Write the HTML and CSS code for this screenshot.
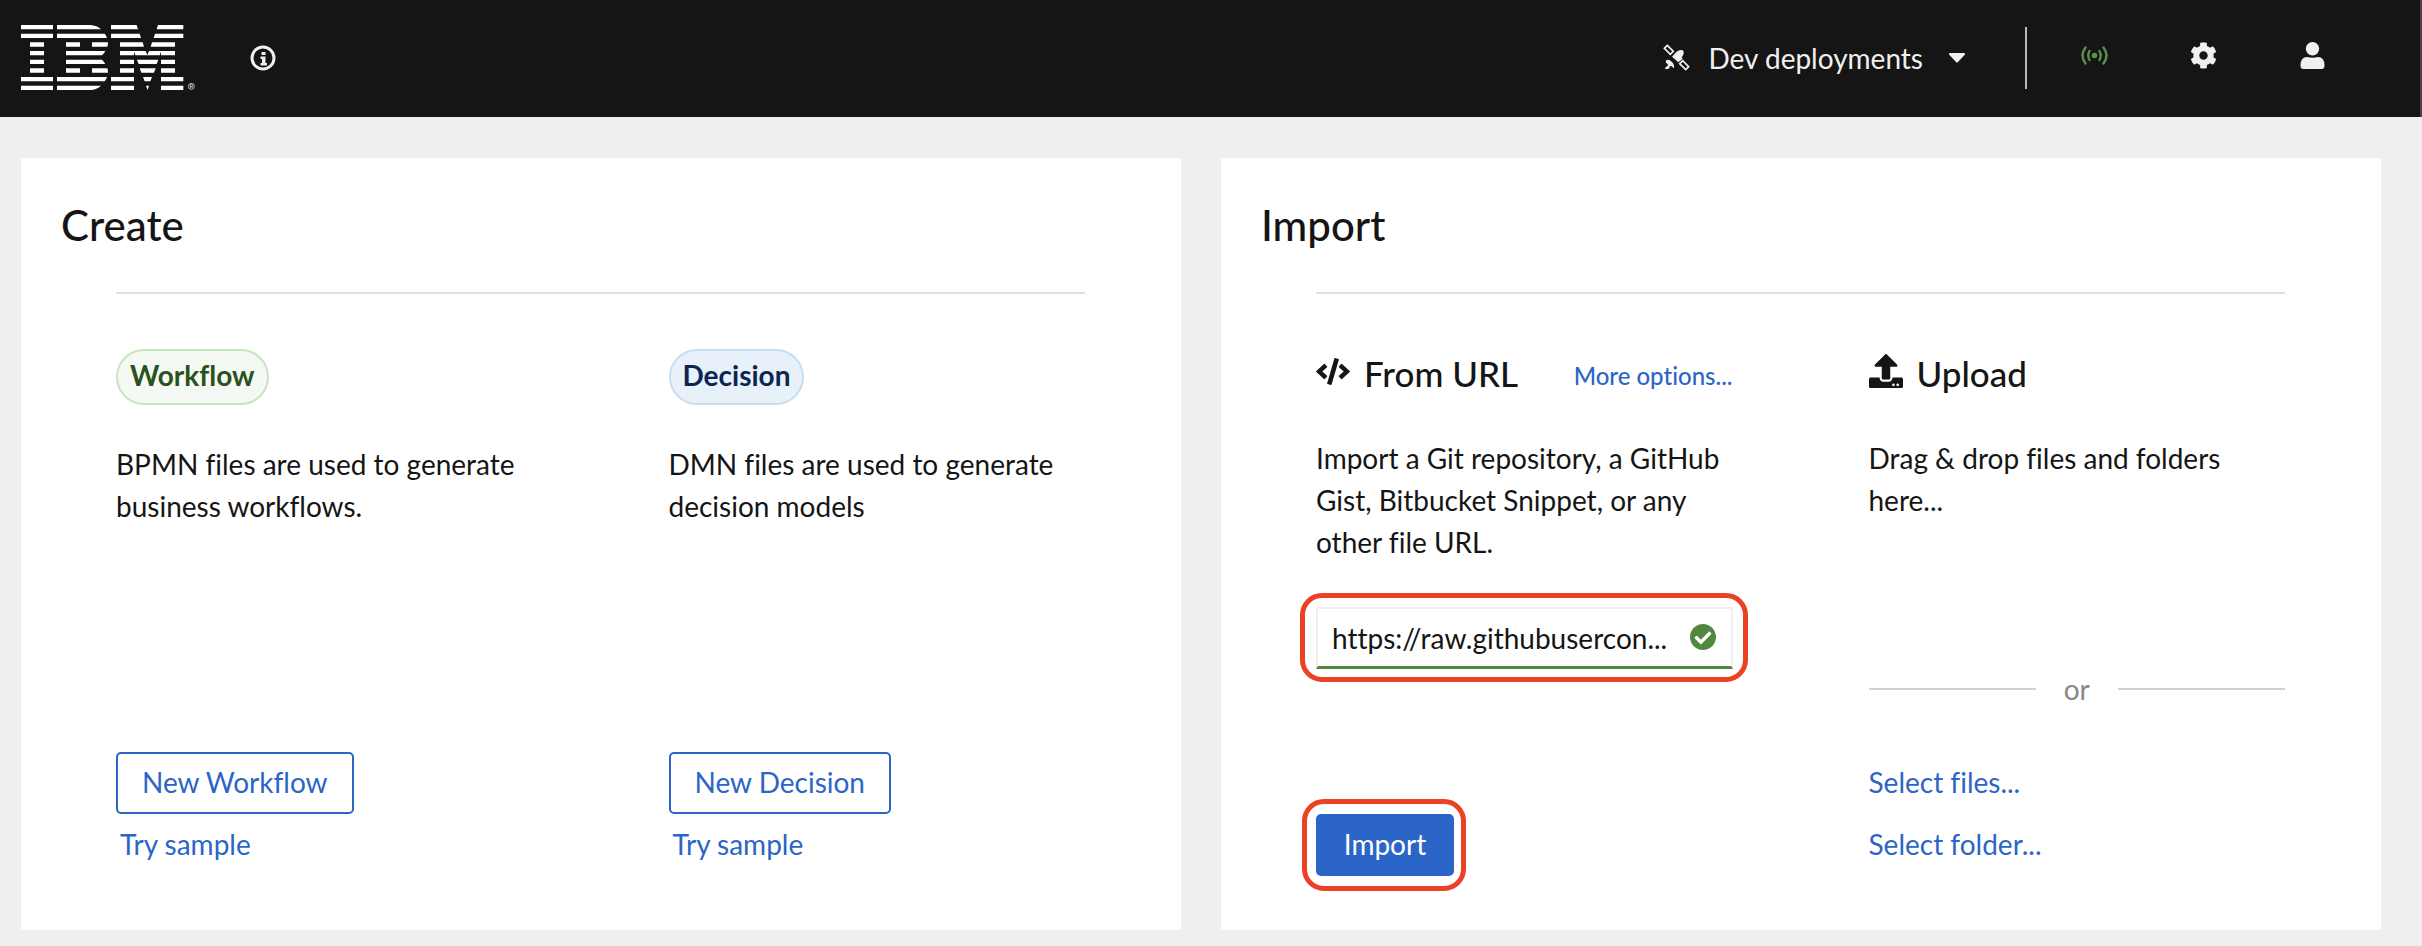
FILE: index.html
```html
<!DOCTYPE html>
<html lang="en">
<head>
<meta charset="utf-8">
<title>Create or import</title>
<link rel="stylesheet" href="styles.css">
</head>
<body>
<header class="masthead">
  <a class="brand" href="#" aria-label="IBM">
    <svg class="brand-logo" viewBox="0 0 525 195" aria-hidden="true">
      <path d="M0 0h96v13H0zM0 26h96v13H0zM27 52h42v13H27zM27 78h42v13H27zM27 104h42v13H27zM27 130h42v13H27zM0 156h96v13H0zM0 182h96v13H0z"/>
      <path d="M108 0h100q20 1 32 13H108zM108 26h143q5 6 7 13H108zM135 52h42v13h-42zM213 52h48q0 7-2 13h-46zM135 78h118q-4 8-10 13H135zM135 104h108q6 5 10 13H135zM135 130h42v13h-42zM213 130h46q2 6 2 13h-48zM108 156h150q-2 7-7 13H108zM108 182h132q-12 12-32 13H108z"/>
      <path d="M270 0h77l4 13h-81zM411 0h76v13h-80zM270 26h86l4 13h-90zM402 26h85v13h-89zM297 52h68l4 13h-72zM393 52h69v13h-73zM297 78h77l5 12 5-12h78v13h-42V80l-4 11h-73l-4-11v11h-42zM297 104h42v13h-42zM348 104h64l-5 13h-54zM420 104h42v13h-42zM297 130h42v13h-42zM356 130h48l-5 13h-38zM420 130h42v13h-42zM270 156h69v13h-69zM366 156h27l-5 13h-17zM420 156h67v13h-67zM270 182h69v13h-69zM375 182h9l-4 13zM420 182h67v13h-67z"/>
      <circle class="mark-ring" cx="511" cy="184" r="9"/>
      <path class="mark-ring" d="M508 190v-11h4q3 0 3 3t-3 3h-4m4 0l3 5"/>
    </svg>
  </a>
  <button class="icon-button info" aria-label="About">
    <svg viewBox="0 0 26 26" aria-hidden="true"><circle cx="13" cy="13" r="11" fill="none" stroke="currentColor" stroke-width="3"/><path d="M11.500 7h4v3h-4zM10.500 11.500h5v6.500h1.500v2.500h-6.500V18H12v-4h-1.500z"/></svg>
  </button>
  <div class="tools">
    <button class="deployments">
      <svg class="satellite" viewBox="0 0 81 81" aria-hidden="true">
        <path d="M13 4l18 18-9 9L4 13z" fill="none" stroke="currentColor" stroke-width="5"/>
        <path d="M59 50l18 18-9 9-18-18z" fill="none" stroke="currentColor" stroke-width="5"/>
        <path d="M43 22q8-5 13-4 7 1 6 9 0 8-6 13l3 4-13 11-19-17 12-13zM10 48q9-2 17 6t6 19l-8-7-5 1q1 7-5 8H6q0-5 4-7l6-5-8-8z"/>
      </svg>
      <span>Dev deployments</span>
      <svg class="caret" viewBox="0 0 16 10" aria-hidden="true"><path d="M1 0h14q2 1 .5 2L9 9q-1 1-2 0L.5 2Q-1 1 1 0z"/></svg>
    </button>
    <span class="divider"></span>
    <button class="icon-button" aria-label="Connection status">
      <svg class="signal" viewBox="0 0 27 27" aria-hidden="true"><circle cx="13.500" cy="13.500" r="2.800"/><path d="M8.500 9q-2.500 4.500 0 9M18.500 9q2.500 4.500 0 9M4.500 5.500q-6 8 0 16M22.500 5.500q6 8 0 16" fill="none" stroke="currentColor" stroke-width="2.400" stroke-linecap="round"/></svg>
    </button>
    <button class="icon-button" aria-label="Settings">
      <svg viewBox="0 0 512 512" aria-hidden="true"><path d="M487.400 315.700l-42.600-24.600c4.300-23.200 4.300-47 0-70.200l42.600-24.600c4.900-2.800 7.100-8.600 5.500-14-11.100-35.600-30-67.800-54.700-94.600-3.800-4.100-10-5.100-14.800-2.300L380.800 110c-17.900-15.400-38.500-27.300-60.800-35.100V25.800c0-5.600-3.900-10.500-9.400-11.700-36.700-8.200-74.300-7.800-109.200 0-5.500 1.200-9.400 6.100-9.400 11.700V75c-22.200 7.900-42.800 19.800-60.800 35.100L88.700 85.500c-4.900-2.800-11-1.900-14.800 2.300-24.700 26.700-43.600 58.900-54.700 94.600-1.700 5.400.6 11.200 5.500 14L67.300 221c-4.300 23.200-4.300 47 0 70.200l-42.600 24.600c-4.900 2.800-7.100 8.600-5.500 14 11.100 35.600 30 67.800 54.700 94.600 3.800 4.100 10 5.100 14.800 2.300l42.600-24.600c17.900 15.400 38.500 27.300 60.800 35.100v49.200c0 5.600 3.900 10.500 9.400 11.700 36.700 8.200 74.300 7.800 109.200 0 5.500-1.200 9.400-6.100 9.400-11.700v-49.200c22.200-7.900 42.800-19.800 60.800-35.100l42.600 24.600c4.900 2.800 11 1.900 14.800-2.300 24.700-26.700 43.600-58.900 54.700-94.600 1.500-5.500-.7-11.300-5.600-14.100zM256 336c-44.100 0-80-35.900-80-80s35.900-80 80-80 80 35.900 80 80-35.900 80-80 80z"/></svg>
    </button>
    <button class="icon-button" aria-label="Account">
      <svg viewBox="0 0 27 27" aria-hidden="true"><circle cx="13.500" cy="6.700" r="6.700"/><path d="M8 15q5.500 1.500 11 0 6.500 0 6.500 8.500 0 3.500-3 3.500h-18q-3 0-3-3.500Q1.500 15 8 15z"/></svg>
    </button>
  </div>
</header>

<main class="cards">
  <section class="card">
    <h1 class="card-title">Create</h1>
    <div class="card-body">
      <article class="column">
        <div class="column-head"><span class="pill pill-green">Workflow</span></div>
        <p class="text text-create">BPMN files are used to generate business workflows.</p>
        <div class="actions">
          <button class="button button-outline">New Workflow</button>
          <a class="link link-inset" href="#">Try sample</a>
        </div>
      </article>
      <article class="column">
        <div class="column-head"><span class="pill pill-blue">Decision</span></div>
        <p class="text text-create">DMN files are used to generate decision models</p>
        <div class="actions">
          <button class="button button-outline">New Decision</button>
          <a class="link link-inset" href="#">Try sample</a>
        </div>
      </article>
    </div>
  </section>

  <section class="card">
    <h1 class="card-title">Import</h1>
    <div class="card-body">
      <article class="column">
        <div class="column-head">
          <svg class="head-icon code" viewBox="0 0 640 512" aria-hidden="true"><path d="M278.900 511.500l-61-17.700c-6.400-1.800-10-8.500-8.200-14.900L346.200 8.700c1.800-6.400 8.500-10 14.900-8.200l61 17.700c6.400 1.800 10 8.500 8.200 14.900L293.800 503.300c-1.900 6.400-8.500 10.100-14.900 8.200zm-114-112.200l43.500-46.400c4.600-4.900 4.300-12.700-.8-17.200L117 256l90.600-79.700c5.100-4.500 5.500-12.300.8-17.200l-43.500-46.400c-4.500-4.800-12.100-5.100-17-.5L3.800 247.200c-5.100 4.700-5.100 12.800 0 17.500l144.100 135.100c4.900 4.600 12.500 4.400 17-.5zm327.200.6l144.100-135.100c5.100-4.700 5.100-12.800 0-17.500L492.100 112.100c-4.800-4.500-12.400-4.300-17 .5L431.600 159c-4.600 4.900-4.300 12.700.8 17.200L523 256l-90.600 79.700c-5.100 4.500-5.500 12.300-.8 17.200l43.500 46.400c4.500 4.900 12.100 5.100 17 .6z"/></svg>
          <h2 class="head-title">From URL</h2>
          <a class="more" href="#">More options...</a>
        </div>
        <p class="text"><label for="url">Import a Git repository, a GitHub Gist, Bitbucket Snippet, or any other file URL.</label></p>
        <div class="url-field highlight">
          <input class="url-input" id="url" type="text" value="https://raw.githubusercon...">
          <svg class="valid" viewBox="8 8 496 496" aria-hidden="true"><path d="M504 256c0 136.967-111.033 248-248 248S8 392.967 8 256 119.033 8 256 8s248 111.033 248 248zM227.314 387.314l184-184c6.248-6.248 6.248-16.379 0-22.627l-22.627-22.627c-6.248-6.249-16.379-6.249-22.628 0L216 308.118l-70.059-70.059c-6.248-6.248-16.379-6.248-22.628 0l-22.627 22.627c-6.248 6.248-6.248 16.379 0 22.627l104 104c6.249 6.249 16.379 6.249 22.628.001z"/></svg>
        </div>
        <div class="actions">
          <button class="button button-primary highlight">Import</button>
        </div>
      </article>
      <article class="column">
        <div class="column-head">
          <svg class="head-icon upload" viewBox="0 0 512 512" aria-hidden="true"><path d="M296 384h-80c-13.300 0-24-10.700-24-24V192h-87.700c-17.800 0-26.700-21.500-14.100-34.100L242.300 5.700c7.500-7.500 19.800-7.500 27.300 0l152.200 152.200c12.600 12.600 3.700 34.100-14.100 34.100H320v168c0 13.300-10.700 24-24 24zm216-8v112c0 13.300-10.700 24-24 24H24c-13.300 0-24-10.700-24-24V376c0-13.300 10.700-24 24-24h136v8c0 30.900 25.100 56 56 56h80c30.900 0 56-25.100 56-56v-8h136c13.300 0 24 10.700 24 24zm-124 88c0-11-9-20-20-20s-20 9-20 20 9 20 20 20 20-9 20-20zm64 0c0-11-9-20-20-20s-20 9-20 20 9 20 20 20 20-9 20-20z"/></svg>
          <h2 class="head-title">Upload</h2>
        </div>
        <p class="text">Drag &amp; drop files and folders here...</p>
        <div class="actions">
          <div class="or">or</div>
          <a class="link" href="#">Select files...</a>
          <a class="link" href="#">Select folder...</a>
        </div>
      </article>
    </div>
  </section>
</main>
</body>
</html>
```
FILE: styles.css
```css
:root {
  --ink: #151515;
  --blue: #2b65c7;
  --green: #52873f;
  --line: #d2d2d2;
  --red: #ec4125;
}

* { box-sizing: border-box; }

body {
  margin: 0;
  background: #efefef;
  color: var(--ink);
  font-family: Lato, "Open Sans", sans-serif;
  font-size: 28px;
  font-variant-ligatures: none;
  line-height: 42px;
}

button, input { font: inherit; font-variant-ligatures: none; color: inherit; }
button { cursor: pointer; }
a { color: var(--blue); text-decoration: none; }
svg { display: block; fill: currentColor; }

.masthead {
  display: flex;
  align-items: center;
  height: 117px;
  padding: 0 94px 2px 21px;
  border-right: 2px solid #444;
  background: var(--ink);
  color: #f0f0f0;
}

.brand { color: #fff; }
.brand-logo { width: 175px; height: 65px; }
.mark-ring { fill: none; stroke: currentColor; stroke-width: 2; }

.icon-button {
  width: 27px;
  padding: 0;
  border: 0;
  background: none;
}

.info { width: 26px; margin-left: 54px; }

.tools {
  display: flex;
  align-items: center;
  gap: 82px;
  margin-left: auto;
}

.tools .icon-button { padding-bottom: 4px; }

.deployments {
  display: flex;
  align-items: center;
  padding: 0;
  border: 0;
  background: none;
}

.satellite { width: 27px; margin-right: 18px; }
.caret { width: 16px; margin-left: 26px; }
.tools .deployments { margin-right: -22px; }
.divider { width: 2px; height: 62px; margin-right: -28px; background: #b8bbbe; }
.signal { color: #5b8f4b; }

.cards {
  display: grid;
  grid-template-columns: 1fr 1fr;
  gap: 40px;
  padding: 41px 41px 16px 21px;
}

.card {
  display: flex;
  flex-direction: column;
  padding-bottom: 54px;
  background: #fff;
}

.card-title {
  margin: 0;
  padding: 40px;
  font-size: 42px;
  font-weight: 500;
  line-height: 54px;
}

.card-body {
  display: grid;
  grid-template-columns: 1fr 1fr;
  gap: 136px;
  margin: 0 96px 0 95px;
  padding-top: 55px;
  border-top: 2px solid #e0e0e0;
}

.column {
  display: flex;
  flex-direction: column;
  min-height: 527px;
}

.column-head { display: flex; height: 56px; margin-bottom: 32px; }

.pill {
  padding: 3px 12px 9px;
  border: 2px solid;
  border-radius: 28px;
  font-weight: 700;
}

.pill-green { border-color: #c5e6bc; background: #f4f9f3; color: #2a5120; }
.pill-blue { border-color: #c3dff2; background: #e8f1f9; color: #0b2650; }

.head-icon { flex: none; width: 34px; margin-right: 14px; }
.code { height: 27px; margin-top: 9px; }
.upload { height: 34px; margin-top: 5px; }

.head-title {
  margin: 0;
  font-size: 35px;
  font-weight: 500;
  line-height: 48px;
}

.more {
  margin-left: auto;
  font-size: 24px;
  font-weight: 500;
  line-height: 54px;
}

.text { margin: 0; }
.text-create { margin-top: 6px; }

.url-field { margin-top: 44px; }

.url-input {
  display: block;
  width: 100%;
  height: 62px;
  padding: 0 58px 0 14px;
  border: 2px solid #efefef;
  border-bottom: 3px solid var(--green);
  border-radius: 0;
  outline: 0;
  background: #fff;
}

.valid {
  position: absolute;
  top: 17px;
  right: 17px;
  width: 26px;
  color: var(--green);
}

.highlight { position: relative; }

.highlight::after {
  content: "";
  position: absolute;
  inset: -14px -15px -13px -16px;
  border: 5px solid var(--red);
  border-radius: 22px;
  pointer-events: none;
}

.button-primary.highlight::after { inset: -17px -14px -17px -16px; }

.actions {
  display: flex;
  flex-direction: column;
  align-items: flex-start;
  margin-top: auto;
}

.button {
  min-width: 138px;
  height: 62px;
  padding: 0 24px 2px;
  border: 2px solid var(--blue);
  border-radius: 5px;
}

.button-outline { background: #fff; color: var(--blue); }
.button-primary { background: var(--blue); color: #fff; }

.link { line-height: 60px; padding-bottom: 2px; }
.link-inset { margin-left: 4px; }

.or {
  display: flex;
  align-items: center;
  gap: 28px;
  width: 100%;
  margin-bottom: 42px;
  color: #86888a;
}

.or::before, .or::after {
  content: "";
  flex: 1;
  height: 2px;
  background: var(--line);
}
```
